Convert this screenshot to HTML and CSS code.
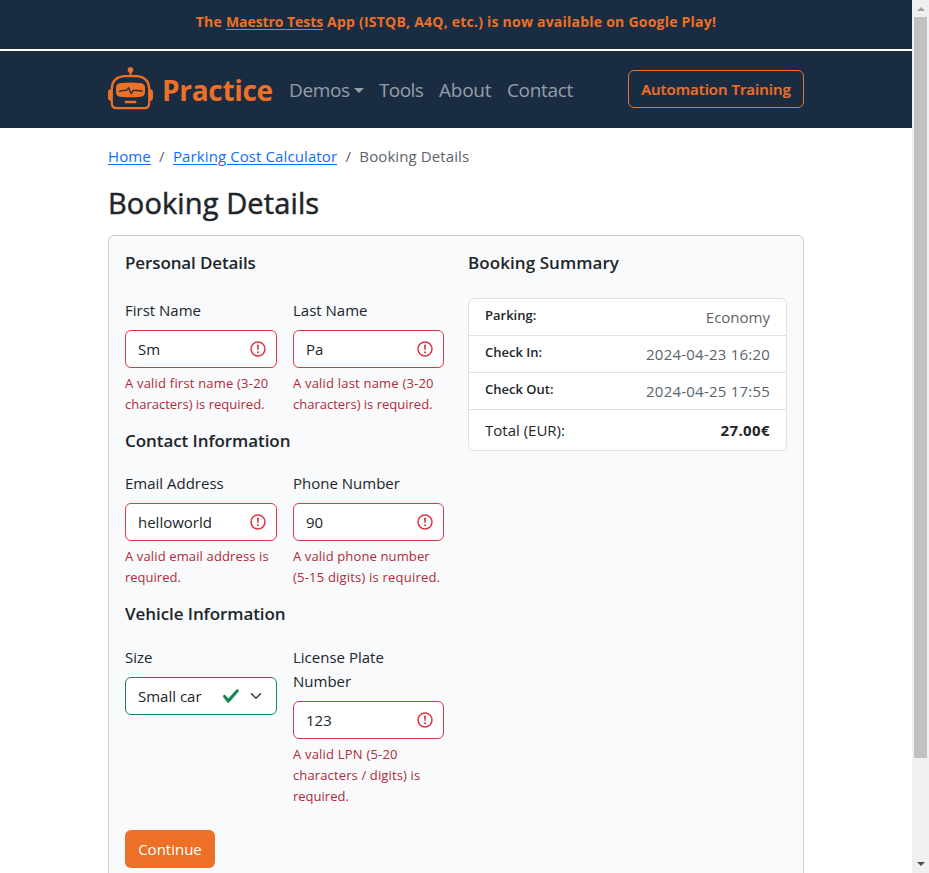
FILE: index.html
```html
<!DOCTYPE html>
<html lang="en">
<head>
<meta charset="utf-8">
<title>Booking Details</title>
<link rel="stylesheet" href="styles.css">
</head>
<body>
<svg class="defs" width="0" height="0">
  <symbol id="alert" viewBox="0 0 18 18"><circle cx="9" cy="9" r="7" fill="none" stroke="#dc3545" stroke-width="1.5"/><path d="M8 4.700h2l-.4 5.300H8.400z" fill="#dc3545"/><circle cx="9" cy="12.300" r="1" fill="#dc3545"/></symbol>
</svg>
<div class="window">
  <div class="page">
    <div class="banner">The <a href="#">Maestro Tests</a> App (ISTQB, A4Q, etc.) is now available on Google Play!</div>
    <nav class="nav">
      <div class="container nav-row">
        <svg class="logo" width="46" height="44" viewBox="0 0 46 44">
          <g fill="#ec7026">
            <circle cx="22.500" cy="3.900" r="2.800"/><rect x="21.500" y="5" width="2" height="5"/>
            <path d="M3.500 23H2.600Q0 23.500 0 26v6q0 2.500 2.600 3H3.500zM41.500 23h.9Q45 23.500 45 26v6q0 2.500-2.600 3h-.9z"/>
            <path d="M12.500 17Q22.500 15.800 32.500 17 37 17.500 37 21.500V26Q37 30.300 33 30.700 22.500 32 12 30.700 8 30.300 8 26V21.500Q8 17.500 12.500 17z"/>
            <rect x="16.700" y="34.700" width="11.600" height="2.500" rx="1"/>
          </g>
          <path d="M15.500 10.200h14Q41.200 12 41.200 23v14.500q0 4.700-5 4.700H8.800q-5 0-5-4.700V23Q3.800 12 15.500 10.200z" fill="none" stroke="#ec7026" stroke-width="2.200"/>
          <path d="M11.500 25.300q3-1.200 7-.9l2-2.600 2.600 5.700 2.300-3.100q4-.1 8.600.6" fill="none" stroke="#1a2c42" stroke-width="1.300" stroke-linejoin="round" stroke-linecap="round"/>
        </svg>
        <a class="brand">Practice</a>
        <div class="links"><a class="l-demos">Demos<i class="caret"></i></a><a class="l-tools">Tools</a><a class="l-about">About</a><a class="l-contact">Contact</a></div>
        <a class="training"><span>Automation Training</span></a>
      </div>
    </nav>
    <main class="container">
      <div class="crumbs"><a href="#">Home</a><i>/</i><a href="#">Parking Cost Calculator</a><i>/</i><span>Booking Details</span></div>
      <h1>Booking Details</h1>
      <div class="card">
        <form class="form">
          <h2>Personal Details</h2>
          <div class="pair">
            <div><label>First Name</label><div class="control bad"><span>Sm</span><svg><use href="#alert"/></svg></div><p class="error"><span class="wide">A valid first name (3-20</span><br>characters) is required.</p></div>
            <div><label>Last Name</label><div class="control bad"><span>Pa</span><svg><use href="#alert"/></svg></div><p class="error"><span class="wide">A valid last name (3-20</span><br>characters) is required.</p></div>
          </div>
          <h2 class="next">Contact Information</h2>
          <div class="pair">
            <div><label>Email Address</label><div class="control bad"><span>helloworld</span><svg><use href="#alert"/></svg></div><p class="error"><span class="mid">A valid email address is</span><br>required.</p></div>
            <div><label>Phone Number</label><div class="control bad"><span>90</span><svg><use href="#alert"/></svg></div><p class="error"><span class="mid">A valid phone number</span><br><span class="wide">(5-15 digits) is required.</span></p></div>
          </div>
          <h2 class="next vehicle">Vehicle Information</h2>
          <div class="pair">
            <div><label>Size</label><div class="control good"><span>Small car</span>
              <svg class="check" viewBox="0 0 8 8"><path fill="#198754" d="M2.300 6.730.6 4.530c-.4-1.040.46-1.400 1.100-.8l1.100 1.400 3.400-3.800c.6-.63 1.600-.27 1.200.7l-4 4.600c-.43.5-.8.4-1.100.1z"/></svg>
              <svg class="chev" viewBox="0 0 16 16"><path d="m2 5 6 6 6-6" fill="none" stroke="#343a40" stroke-width="2" stroke-linecap="round" stroke-linejoin="round"/></svg></div></div>
            <div><label>License Plate<br>Number</label><div class="control bad"><span>123</span><svg><use href="#alert"/></svg></div><p class="error"><span class="wide">A valid LPN (5-20</span><br><span class="mid">characters / digits) is</span><br>required.</p></div>
          </div>
          <a class="continue">Continue</a>
        </form>
        <section class="summary">
          <h2>Booking Summary</h2>
          <ul>
            <li><b>Parking:</b><span>Economy</span></li>
            <li><b>Check In:</b><span class="date">2024-04-23 16:20</span></li>
            <li><b>Check Out:</b><span class="date">2024-04-25 17:55</span></li>
            <li class="total"><span>Total (EUR):</span><strong>27.00€</strong></li>
          </ul>
        </section>
      </div>
    </main>
  </div>
  <div class="scrollbar"><i class="up"></i><div class="thumb"></div><i class="down"></i></div>
</div>
</body>
</html>
```
FILE: styles.css
```css
* { box-sizing: border-box; }
body { margin: 0; overflow: hidden; background: #fff; color: #212529; font: 400 15px/24px "Open Sans", sans-serif; }
a { color: inherit; text-decoration: none; white-space: nowrap; }
h1, h2, p, ul { margin: 0; padding: 0; }
svg { display: block; flex: none; }
.defs { position: absolute; }
.window { display: flex; height: 873px; overflow: hidden; }
.page { width: 912px; overflow: hidden; }
.container { width: 696px; margin: 0 auto; }
.banner { height: 51px; padding-top: 10px; background: #1a2c42; border-bottom: 2px solid #fff; color: #ec7026; font-size: 14px; font-weight: 700; letter-spacing: .23px; text-align: center; }
.banner a { letter-spacing: -.06px; text-decoration: underline; text-underline-offset: 2px; }
.nav { height: 77px; background: #1a2c42; }
.nav-row { display: flex; align-items: center; height: 76px; }
.logo { margin-bottom: 2px; }
.brand { width: 111px; margin-left: 8px; padding-top: 2px; color: #ec7026; font-size: 28px; font-weight: 700; letter-spacing: -.3px; }
.links { display: flex; margin-left: 16px; padding-top: 2px; color: rgba(255,255,255,.55); font-size: 19px; letter-spacing: -.35px; }
.l-demos { width: 90px; display: flex; align-items: center; }
.l-tools { width: 60px; letter-spacing: -.6px; }
.l-about { width: 68px; letter-spacing: -.25px; }
.caret { border: 5px solid transparent; border-top-color: currentColor; border-bottom: 0; margin-left: 4px; }
.training { display: flex; align-items: center; justify-content: center; width: 176px; height: 38px; margin-left: auto; border: 1px solid #ec7026; border-radius: 6px; color: #ec7026; font-weight: 600; -webkit-text-stroke: .2px #ec7026; }
.crumbs { display: flex; padding-top: 16px; color: #5c636a; letter-spacing: .1px; }
.crumbs a { color: #0d6efd; text-decoration: underline; text-underline-offset: 2px; }
.crumbs i { padding: 0 8.300px; font-style: normal; }
h1 { height: 36px; margin-top: 17px; font-size: 29px; line-height: 36px; font-weight: 500; letter-spacing: .12px; -webkit-text-stroke: .5px #212529; }
.card { display: flex; gap: 24px; height: 700px; margin-top: 14px; padding: 16px; background: #f8fafc; border: 1px solid #ccc; border-radius: 6px; }
.form, .summary { width: 319px; }
h2 { height: 21.600px; margin-bottom: 24px; font-size: 17px; line-height: 21.600px; font-weight: 600; letter-spacing: -.12px; white-space: nowrap; }
.summary h2 { letter-spacing: .07px; }
h2.next { margin: 15px 0 19.700px; letter-spacing: -.07px; }
h2.vehicle { margin-bottom: 20.700px; }
.pair { display: grid; grid-template-columns: 152px 151px; gap: 16px; white-space: nowrap; }
label { display: block; margin-bottom: 8px; }
.control { display: flex; align-items: center; height: 38px; padding: 0 9px 0 12px; background: #fff; border: 1px solid #dc3545; border-radius: 6px; }
.control span { margin-right: auto; }
.control svg { width: 18px; height: 18px; }
.control.good { border-color: #198754; padding-right: 14px; }
.control .check { width: 18px; height: 18px; margin-right: 10px; }
.control .chev { width: 12px; height: 12px; }
.error { margin-top: 5px; color: #b02a37; font-size: 13px; line-height: 21px; }
.wide { letter-spacing: .2px; }
.mid { letter-spacing: .13px; }
.continue { display: flex; align-items: center; justify-content: center; width: 90px; height: 38px; margin-top: 23px; background: #ec7026; border-radius: 6px; color: #fff; }
.summary ul { list-style: none; background: #fff; border: 1px solid #dee2e6; border-radius: 6px; }
.summary li { display: flex; justify-content: space-between; height: 37px; padding: 6px 16px 0; border-bottom: 1px solid #dee2e6; color: #5c636a; }
.summary li b { color: #212529; font-size: 13px; line-height: 21px; font-weight: 600; }
.date { letter-spacing: .22px; }
.summary li.total { height: 40px; padding-top: 8px; border: 0; color: #212529; }
.total strong { letter-spacing: .4px; }
.scrollbar { display: flex; flex-direction: column; align-items: center; width: 17px; height: 873px; background: #f0f0f0; }
.thumb { width: 13px; height: 741px; margin-top: 6px; background: #c1c1c1; }
.up, .down { border: 4px solid transparent; }
.up { margin-top: 7px; border-top: 0; border-bottom-color: #a3a3a3; }
.down { margin: auto 0 7px; border-bottom: 0; border-top-color: #505050; }
```
